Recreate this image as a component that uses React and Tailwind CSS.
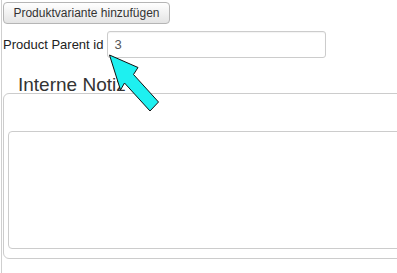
export default function App() {
  return (
    <div className="relative w-[397px] h-[273px] overflow-hidden bg-white" style={{ fontFamily: '"Liberation Sans", Arial, sans-serif' }}>
      <div className="ml-px h-full border-l border-[#cfcfcf] pt-[2px] pl-px">
        {/* Button */}
        <button className="block h-[22px] w-[167px] rounded-[4px] border border-[#b5b5b5] bg-gradient-to-b from-white to-[#e4e4e4] text-[12px] leading-[20px] text-[#333]">
          Produktvariante hinzufügen
        </button>

        {/* Parent id */}
        <div className="mt-[7px] flex items-center gap-[4px]">
          <label className="text-[13px] leading-[16px] text-[#222]">Product Parent id</label>
          <div className="h-[27px] w-[219px] rounded-[3px] border border-[#cccccc] pl-[6px] text-[13px] leading-[25px] text-[#555] shadow-[inset_0_1px_1px_rgba(0,0,0,0.05)]">
            3
          </div>
        </div>

        {/* Legend */}
        <div className="mt-[16px] ml-[15px] h-[19px] text-[19px] leading-[22px] text-[#333]">Interne Notiz</div>

        {/* Fieldset */}
        <div className="w-[430px] rounded-[6px] border border-[#cccccc] pl-[4px] pt-[37px] pb-[9px]">
          <div className="h-[118px] w-[420px] rounded-[4px] border border-[#cccccc]" />
        </div>
      </div>

      {/* Annotation arrow */}
      <svg className="pointer-events-none absolute left-0 top-0" width="397" height="273" viewBox="0 0 397 273">
        <polygon
          points="109.5,55 138,67.5 133.5,74.5 158.5,102 150,111 124.5,83 120.5,90"
          fill="#1ef0f0"
          stroke="#111"
          strokeWidth="1"
          strokeLinejoin="miter"
        />
      </svg>
    </div>
  );
}
